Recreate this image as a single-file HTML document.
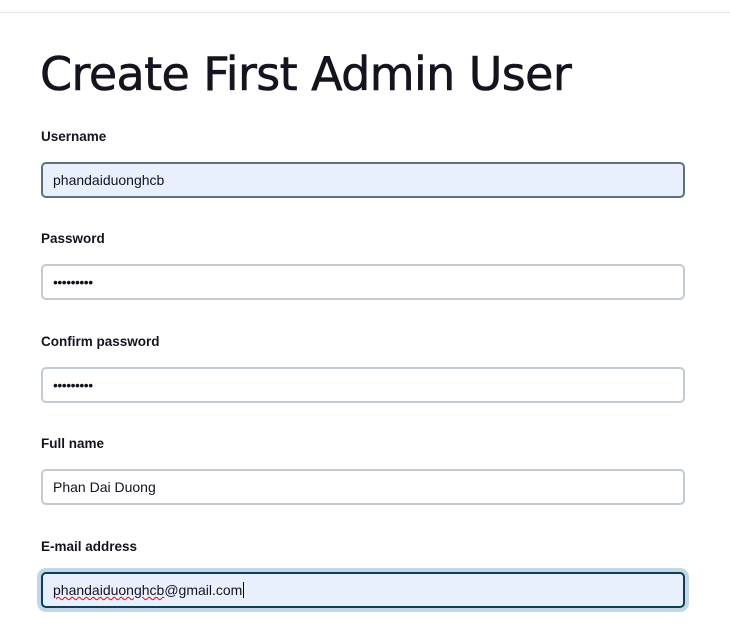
<!DOCTYPE html>
<html><head><style>
body{margin:0;background:#fff;width:730px;height:632px;overflow:hidden;font-family:"Liberation Sans","DejaVu Sans",sans-serif;color:#14141f;position:relative}
.top{position:absolute;left:0;right:0;top:12px;height:1px;background:#e4e4e4}
h1{position:absolute;left:40px;top:44px;margin:0;font-size:46px;font-weight:400;letter-spacing:-0.6px;line-height:60px;font-family:"DejaVu Sans",sans-serif;-webkit-text-stroke:0.6px #14141f}
.l{position:absolute;left:41px;font-size:13.5px;font-weight:bold;}
.i{position:absolute;left:41px;height:32px;border:2px solid #c2cbd1;border-radius:5px;box-sizing:content-box;font-size:14px;line-height:32px;padding-left:10px;width:630px}
.f{background:#e8f0fe}
.p{font-size:14px;letter-spacing:-0.5px}
</style></head><body>
<div class="top"></div>
<h1>Create First Admin User</h1>
<div class="l" style="top:129px">Username</div>
<div class="i f" style="top:162px;border-color:#5d707c">phandaiduonghcb</div>
<div class="l" style="top:231px">Password</div>
<div class="i p" style="top:264px">•••••••••</div>
<div class="l" style="top:334px">Confirm password</div>
<div class="i p" style="top:367px">•••••••••</div>
<div class="l" style="top:436px">Full name</div>
<div class="i" style="top:469px">Phan Dai Duong</div>
<div class="l" style="top:539px">E-mail address</div>
<div class="i f" style="top:572px;border-color:#0f3d5c;box-shadow:0 0 0 4px #c3d8e6"><span style="text-decoration:underline wavy red 1px">phandaiduonghcb</span>@gmail.com<span style="border-left:1px solid #000;margin-left:1px"></span></div>
</body></html>
